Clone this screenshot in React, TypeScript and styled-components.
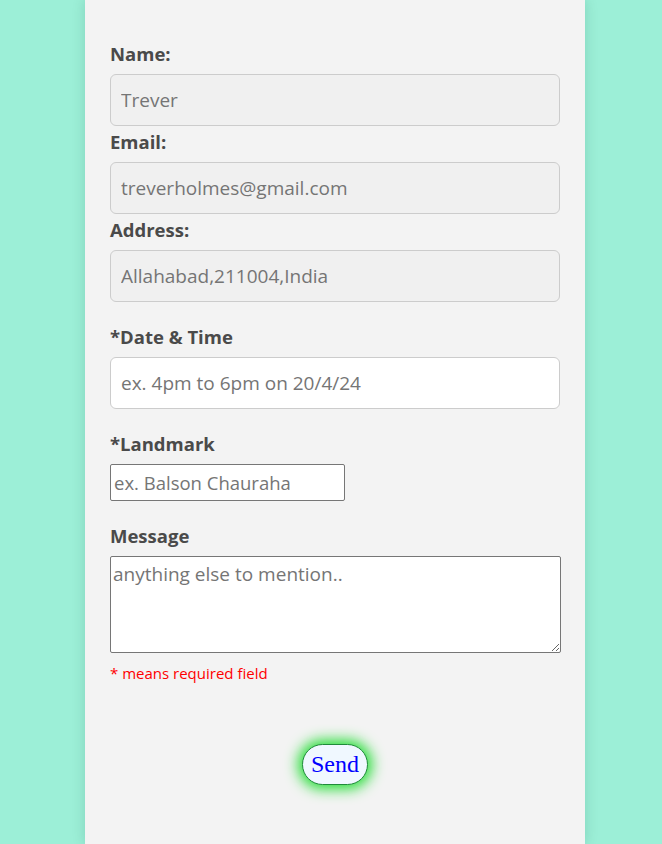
import React from "react";
import styled, { createGlobalStyle } from "styled-components";

const Global = createGlobalStyle`
  html, body { margin: 0; padding: 0; }
  body {
    background: #9cefd7;
    font-family: "Open Sans", sans-serif;
    min-height: 844px;
  }
`;

const Page = styled.div`
  display: flex;
  justify-content: center;
  padding-left: 8px;
`;

const Panel = styled.form`
  width: 500px;
  box-sizing: border-box;
  min-height: 844px;
  background: #f3f3f3;
  box-shadow: 0 0 12px rgba(0, 80, 60, 0.18);
  padding: 42px 25px 0 25px;
  display: flex;
  flex-direction: column;
`;

const Label = styled.label<{ $gap?: number }>`
  display: block;
  font-size: 18.5px;
  line-height: 24px;
  font-weight: 700;
  color: #4a4a4a;
  margin-top: ${(p) => p.$gap ?? 0}px;
  margin-bottom: 8px;
`;

const Field = styled.input<{ $filled?: boolean }>`
  box-sizing: border-box;
  width: 450px;
  height: 52px;
  padding: 0 10px;
  border: 1px solid #cccccc;
  border-radius: 6px;
  background: ${(p) => (p.$filled ? "#f0f0f0" : "#ffffff")};
  font-family: inherit;
  font-size: 19px;
  color: #757575;
  outline: none;
  &::placeholder { color: #757575; }
`;

const SmallField = styled.input`
  box-sizing: border-box;
  width: 235px;
  height: 37px;
  padding: 0 3px;
  border: 1px solid #767676;
  border-radius: 2px;
  background: #fff;
  font-family: inherit;
  font-size: 18.5px;
  outline: none;
  &::placeholder { color: #757575; }
`;

const Area = styled.textarea`
  box-sizing: border-box;
  width: 451px;
  height: 97px;
  padding: 4px 2px;
  border: 1px solid #767676;
  border-radius: 2px;
  background: #fff;
  font-family: inherit;
  font-size: 19px;
  line-height: 26px;
  outline: none;
  resize: vertical;
  display: block;
  &::placeholder { color: #757575; }
`;

const Note = styled.p`
  margin: 10px 0 0 0;
  color: #ff0000;
  font-size: 15px;
  line-height: 20px;
`;

const Actions = styled.div`
  display: flex;
  justify-content: center;
  margin-top: 61px;
`;

const SendButton = styled.button`
  height: 41px;
  padding: 0 8px;
  background: #f0f8ff;
  color: #0000ff;
  border: 1px solid #1f8a3a;
  border-radius: 21px;
  font-family: "Liberation Serif", serif;
  font-size: 24px;
  box-shadow: 0 0 14px 4px #22dd33;
  cursor: pointer;
`;

export default function App() {
  return (
    <>
      <Global />
      <Page>
        <Panel onSubmit={(e) => e.preventDefault()}>
          <Label>Name:</Label>
          <Field $filled readOnly value="Trever" />
          <Label $gap={4}>Email:</Label>
          <Field $filled readOnly value="treverholmes@gmail.com" />
          <Label $gap={4}>Address:</Label>
          <Field $filled readOnly value="Allahabad,211004,India" />
          <Label $gap={23}>*Date &amp; Time</Label>
          <Field placeholder="ex. 4pm to 6pm on 20/4/24" />
          <Label $gap={23}>*Landmark</Label>
          <SmallField placeholder="ex. Balson Chauraha" />
          <Label $gap={23}>Message</Label>
          <Area placeholder="anything else to mention.." />
          <Note>* means required field</Note>
          <Actions>
            <SendButton type="submit">Send</SendButton>
          </Actions>
        </Panel>
      </Page>
    </>
  );
}
